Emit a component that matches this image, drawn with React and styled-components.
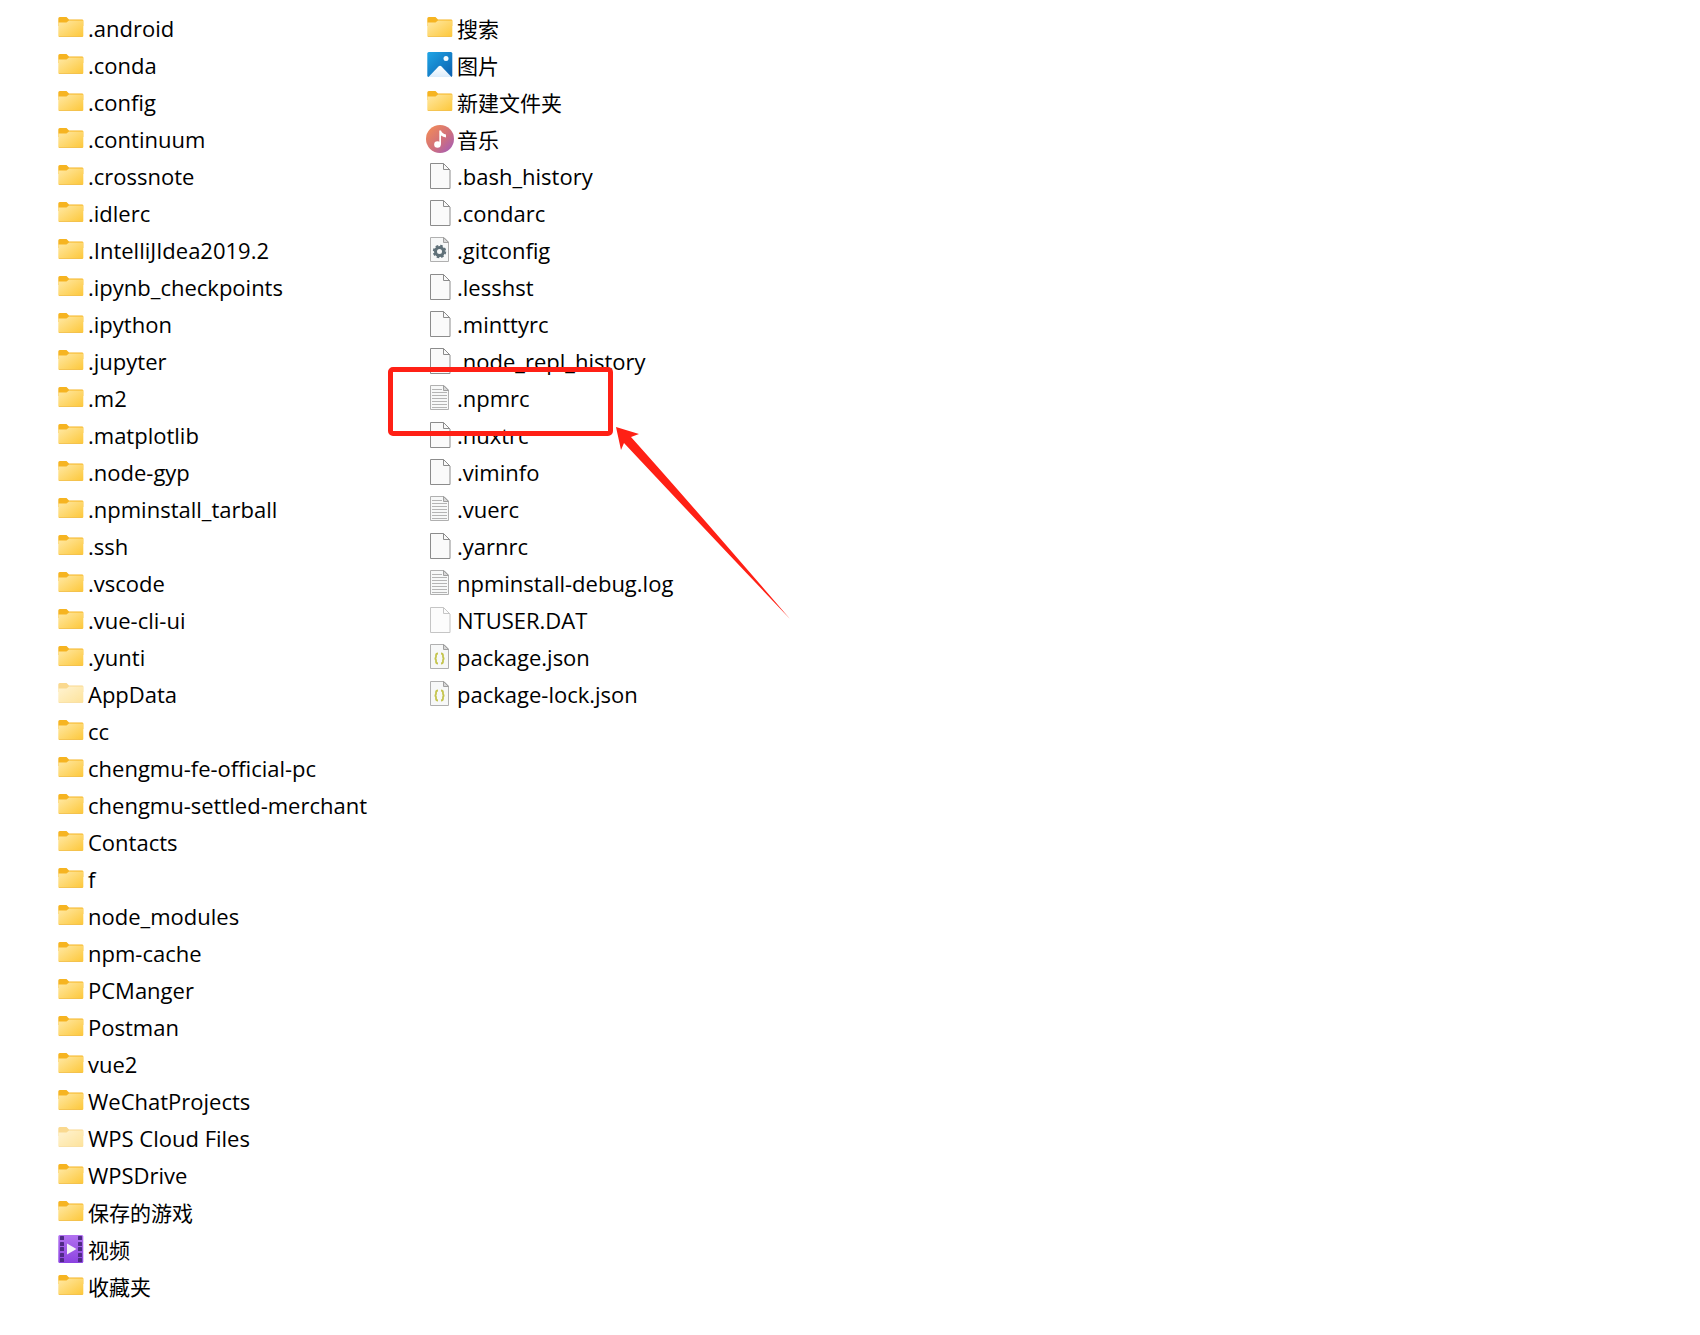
import React from "react";

import styled, { createGlobalStyle } from "styled-components";

const folders = [
  ".android",
  ".conda",
  ".config",
  ".continuum",
  ".crossnote",
  ".idlerc",
  ".IntelliJIdea2019.2",
  ".ipynb_checkpoints",
  ".ipython",
  ".jupyter",
  ".m2",
  ".matplotlib",
  ".node-gyp",
  ".npminstall_tarball",
  ".ssh",
  ".vscode",
  ".vue-cli-ui",
  ".yunti",
  "AppData",
  "cc",
  "chengmu-fe-official-pc",
  "chengmu-settled-merchant",
  "Contacts",
  "f",
  "node_modules",
  "npm-cache",
  "PCManger",
  "Postman",
  "vue2",
  "WeChatProjects",
  "WPS Cloud Files",
  "WPSDrive",
  "保存的游戏",
  "视频",
  "收藏夹",
  "搜索",
  "图片",
  "新建文件夹",
  "音乐",
];

const files = [
  { name: ".bash_history", type: "file" },
  { name: ".condarc", type: "file" },
  { name: ".gitconfig", type: "config" },
  { name: ".lesshst", type: "file" },
  { name: ".minttyrc", type: "file" },
  { name: ".node_repl_history", type: "file" },
  { name: ".npmrc", type: "text", marked: true },
  { name: ".nuxtrc", type: "file" },
  { name: ".viminfo", type: "file" },
  { name: ".vuerc", type: "text" },
  { name: ".yarnrc", type: "file" },
  { name: "npminstall-debug.log", type: "text" },
  { name: "NTUSER.DAT", type: "file", hidden: true },
  { name: "package.json", type: "json" },
  { name: "package-lock.json", type: "json" },
];

// the system folders have their own icon
const specialFolders = { 视频: "video", 图片: "picture", 音乐: "music" };
const hiddenFolders = ["AppData", "WPS Cloud Files"];

const entries = [
  ...folders.map((name) => ({
    name,
    type: specialFolders[name] || "folder",
    hidden: hiddenFolders.includes(name),
  })),
  ...files,
];

const isChinese = (name) => /[\u4e00-\u9fff]/.test(name);

function FolderIcon() {
  return (
    <>
      <path d="M1.300 4.500Q1.300 3 2.800 3H9.500L12 5.500H25Q26.300 5.500 26.300 6.500V12H1.300Z" fill="#f6b421" />
      <path d="M1.300 8.500H9.500L12 6.500H26.300V22Q26.300 23 25 23H2.300Q1.300 23 1.300 22Z" fill="url(#folderFill)" />
      <path d="M2 22.500H25.500" stroke="#efbd4e" strokeOpacity="0.7" />
    </>
  );
}

function PictureIcon() {
  return (
    <>
      <rect x="1.300" y="1" width="25" height="25" rx="1.500" fill="url(#pictureFill)" />
      <path d="M2.500 26L12.500 15.500Q14 14 15.500 15.500L25.500 26Z" fill="url(#hillFill)" />
      <circle cx="20" cy="7.500" r="2.500" fill="#f4fbff" />
    </>
  );
}

function MusicIcon() {
  return (
    <>
      <circle cx="14" cy="14" r="14" fill="url(#musicFill)" />
      <circle cx="11.500" cy="19.500" r="3.300" fill="#fff" />
      <path d="M13.300 5.500H15Q16 8.500 20 9.500V12.500Q17 12 15 10.500V19.500H13.300Z" fill="#fff" />
    </>
  );
}

function VideoIcon() {
  const holes = [1, 7, 12, 18, 23];

  return (
    <>
      <rect x="1.300" width="25" height="28" rx="1.500" fill="url(#videoFill)" />
      {holes.map((y) => (
        <g key={y} fill="#4f2a86">
          <rect x="3" y={y} width="4" height="4" rx="0.500" />
          <rect x="21" y={y} width="4" height="4" rx="0.500" />
        </g>
      ))}
      <path d="M10 8.500L19.500 14L10 19.500Z" fill="#f4f1f8" />
    </>
  );
}

function FileIcon() {
  return (
    <>
      <path d="M4.500 1.500H17.500L24 8V26.500H4.500Z" fill="#fafafa" stroke="#8c8c8c" />
      <path d="M17.500 1.500V7.500H24" fill="none" stroke="#8c8c8c" />
    </>
  );
}

function SmallPage({ children }) {
  return (
    <>
      <path d="M4.500 1.500H18L22.500 6V25.500H4.500Z" fill="#f7f8f8" stroke="#b0b0b0" />
      <path d="M17.500 1.500V6.500H22.500Z" fill="#d8d8d8" stroke="#a0a0a0" />
      {children}
    </>
  );
}

function TextIcon() {
  return (
    <SmallPage>
      <path
        d="M6 5.500H16M6 8.500H21M6 11.500H21M6 14.500H21M6 17.500H21M6 20.500H21M6 23.500H21"
        stroke="#b4b4b4"
      />
    </SmallPage>
  );
}

function ConfigIcon() {
  return (
    <SmallPage>
      <circle cx="13.500" cy="15.500" r="4" fill="none" stroke="#5f7078" strokeWidth="3" />
      <circle
        cx="13.500"
        cy="15.500"
        r="5.800"
        fill="none"
        stroke="#5f7078"
        strokeWidth="1.800"
        strokeDasharray="2.600 1.955"
      />
    </SmallPage>
  );
}

function JsonIcon() {
  return (
    <SmallPage>
      <path
        d="M12 10.500Q10 10.500 10 12.500V14Q10 15.500 8.500 15.500Q10 15.500 10 17V18.500Q10 20.500 12 20.500M15 10.500Q17 10.500 17 12.500V14Q17 15.500 18.500 15.500Q17 15.500 17 17V18.500Q17 20.500 15 20.500"
        fill="none"
        stroke="#c5c54f"
        strokeWidth="1.800"
      />
    </SmallPage>
  );
}

const icons = {
  folder: FolderIcon,
  picture: PictureIcon,
  music: MusicIcon,
  video: VideoIcon,
  file: FileIcon,
  text: TextIcon,
  config: ConfigIcon,
  json: JsonIcon,
};

function IconGradients() {
  return (
    <Gradients aria-hidden="true">
      <defs>
        <linearGradient id="folderFill" x1="0" y1="0" x2="1" y2="1">
          <stop offset="0" stopColor="#ffe9a6" />
          <stop offset="1" stopColor="#fdc738" />
        </linearGradient>
        <linearGradient id="pictureFill" x1="0" y1="0" x2="1" y2="1">
          <stop offset="0" stopColor="#1fa5e6" />
          <stop offset="1" stopColor="#0c5fae" />
        </linearGradient>
        <linearGradient id="hillFill" x1="0" y1="0" x2="0" y2="1">
          <stop offset="0" stopColor="#ffffff" />
          <stop offset="1" stopColor="#dcecfb" />
        </linearGradient>
        <linearGradient id="musicFill" x1="0" y1="0" x2="1" y2="1">
          <stop offset="0.100" stopColor="#f0895a" />
          <stop offset="0.550" stopColor="#d0707c" />
          <stop offset="0.950" stopColor="#a35cb8" />
        </linearGradient>
        <linearGradient id="videoFill" x1="0" y1="0" x2="0" y2="1">
          <stop offset="0" stopColor="#b272f0" />
          <stop offset="1" stopColor="#8b42e0" />
        </linearGradient>
      </defs>
    </Gradients>
  );
}

function Entry({ name, type, hidden, marked }) {
  const Icon = icons[type];

  return (
    <EntryRow>
      <EntryIcon viewBox="0 0 28 28" $faded={hidden} aria-hidden="true">
        <Icon />
      </EntryIcon>
      <EntryName $chinese={isChinese(name)}>{name}</EntryName>
      {marked && (
        <>
          <MarkerFrame />
          <MarkerArrow viewBox="0 0 176 194" aria-hidden="true">
            <path d="M0 0L23 7L15 10Q75 77 174 192Q82 95 8 16L5 23Z" fill="#ff2015" />
          </MarkerArrow>
        </>
      )}
    </EntryRow>
  );
}

function App() {
  return (
    <>
      <GlobalStyle />
      <IconGradients />
      <Explorer>
        <EntryList>
          {entries.map((entry) => (
            <Entry key={entry.name} {...entry} />
          ))}
        </EntryList>
      </Explorer>
    </>
  );
}

const GlobalStyle = createGlobalStyle`
  body {
    margin: 0;
    background-color: #fff;
    color: #000;
  }
`;

const Gradients = styled.svg`
  position: absolute;
  width: 0;
  height: 0;
`;

const Explorer = styled.main`
  padding: 10px 57px 30px;
`;

const EntryList = styled.ul`
  display: grid;
  grid-template-rows: repeat(35, 37px);
  grid-auto-flow: column;
  grid-auto-columns: 369px;
  margin: 0;
  padding: 0;
  list-style: none;
`;

const EntryRow = styled.li`
  position: relative;
  display: flex;
  align-items: flex-start;
  gap: 3px;
`;

const EntryIcon = styled.svg`
  flex: none;
  width: 28px;
  height: 28px;
  margin-top: 4px;
  opacity: ${(props) => (props.$faded ? 0.5 : 1)};
`;

const EntryName = styled.span`
  padding-top: ${(props) => (props.$chinese ? "1px" : "0")};
  font-family: "Open Sans", "Noto Sans CJK SC", sans-serif;
  font-size: ${(props) => (props.$chinese ? "21px" : "22px")};
  line-height: 37px;
  white-space: nowrap;
`;

// red highlight around the marked file, lies over the rows next to it
const MarkerFrame = styled.div`
  position: absolute;
  z-index: 1;
  top: -13px;
  left: -38px;
  box-sizing: border-box;
  width: 225px;
  height: 69px;
  border: 5px solid #ff2015;
  border-radius: 5px;
`;

const MarkerArrow = styled.svg`
  position: absolute;
  z-index: 1;
  top: 47px;
  left: 190px;
  width: 176px;
  height: 194px;
`;

export default App;
